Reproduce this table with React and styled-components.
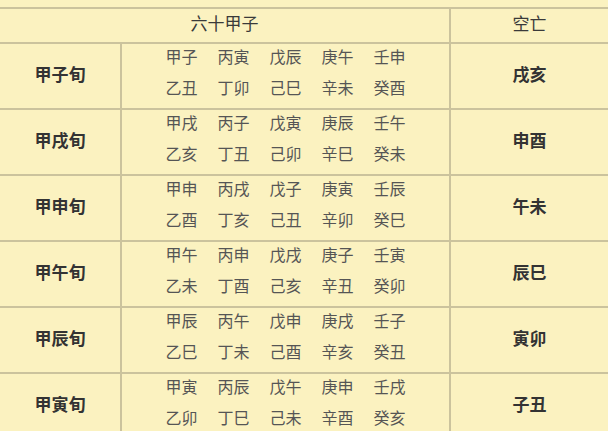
import React from 'react';
import styled, { createGlobalStyle } from 'styled-components';

const GlobalStyle = createGlobalStyle`
  html, body {
    margin: 0;
    padding: 0;
    background: #fbf2c0;
  }
  body {
    font-family: "Noto Sans CJK SC", "Noto Sans", sans-serif;
  }
`;

const line = '#cbc39d';

const Page = styled.div`
  width: 608px;
  height: 431px;
  overflow: hidden;
  padding-top: 7px;
  box-sizing: border-box;
  background: #fbf2c0;
`;

const Table = styled.div`
  border-top: 2px solid ${line};
`;

const HeaderRow = styled.div`
  display: grid;
  grid-template-columns: 451px 1fr;
  height: 33px;
  border-bottom: 2px solid ${line};
`;

const HeaderCell = styled.div`
  display: flex;
  align-items: center;
  justify-content: center;
  padding-bottom: 7px;
  box-sizing: border-box;
  font-size: 17px;
  color: #3a3a3a;
  border-right: ${p => (p.$divider ? `2px solid ${line}` : 'none')};
`;

const Row = styled.div`
  display: grid;
  grid-template-columns: 122px 329px 1fr;
  height: 64px;
  border-bottom: 2px solid ${line};
`;

const LabelCell = styled.div`
  display: flex;
  align-items: center;
  justify-content: center;
  padding-bottom: 6px;
  box-sizing: border-box;
  font-size: 17px;
  font-weight: 700;
  color: #333;
  border-right: ${p => (p.$divider ? `2px solid ${line}` : 'none')};
`;

const PairCell = styled.div`
  display: flex;
  flex-direction: column;
  gap: 11px;
  padding-top: 2px;
  border-right: 2px solid ${line};
`;

const PairLine = styled.div`
  display: flex;
  justify-content: center;
  gap: 20px;
  font-size: 16px;
  line-height: 20px;
  color: #555;
`;

const Pair = styled.span`
  width: 32px;
  text-align: center;
  white-space: nowrap;
`;

const rows = [
  {
    name: '甲子旬',
    top: ['甲子', '丙寅', '戊辰', '庚午', '壬申'],
    bottom: ['乙丑', '丁卯', '己巳', '辛未', '癸酉'],
    void: '戌亥',
  },
  {
    name: '甲戌旬',
    top: ['甲戌', '丙子', '戊寅', '庚辰', '壬午'],
    bottom: ['乙亥', '丁丑', '己卯', '辛巳', '癸未'],
    void: '申酉',
  },
  {
    name: '甲申旬',
    top: ['甲申', '丙戌', '戊子', '庚寅', '壬辰'],
    bottom: ['乙酉', '丁亥', '己丑', '辛卯', '癸巳'],
    void: '午未',
  },
  {
    name: '甲午旬',
    top: ['甲午', '丙申', '戊戌', '庚子', '壬寅'],
    bottom: ['乙未', '丁酉', '己亥', '辛丑', '癸卯'],
    void: '辰巳',
  },
  {
    name: '甲辰旬',
    top: ['甲辰', '丙午', '戊申', '庚戌', '壬子'],
    bottom: ['乙巳', '丁未', '己酉', '辛亥', '癸丑'],
    void: '寅卯',
  },
  {
    name: '甲寅旬',
    top: ['甲寅', '丙辰', '戊午', '庚申', '壬戌'],
    bottom: ['乙卯', '丁巳', '己未', '辛酉', '癸亥'],
    void: '子丑',
  },
];

export default function App() {
  return (
    <>
      <GlobalStyle />
      <Page>
        <Table>
          <HeaderRow>
            <HeaderCell $divider>六十甲子</HeaderCell>
            <HeaderCell>空亡</HeaderCell>
          </HeaderRow>
          {rows.map(r => (
            <Row key={r.name}>
              <LabelCell $divider>{r.name}</LabelCell>
              <PairCell>
                <PairLine>
                  {r.top.map(p => <Pair key={p}>{p}</Pair>)}
                </PairLine>
                <PairLine>
                  {r.bottom.map(p => <Pair key={p}>{p}</Pair>)}
                </PairLine>
              </PairCell>
              <LabelCell>{r.void}</LabelCell>
            </Row>
          ))}
        </Table>
      </Page>
    </>
  );
}
